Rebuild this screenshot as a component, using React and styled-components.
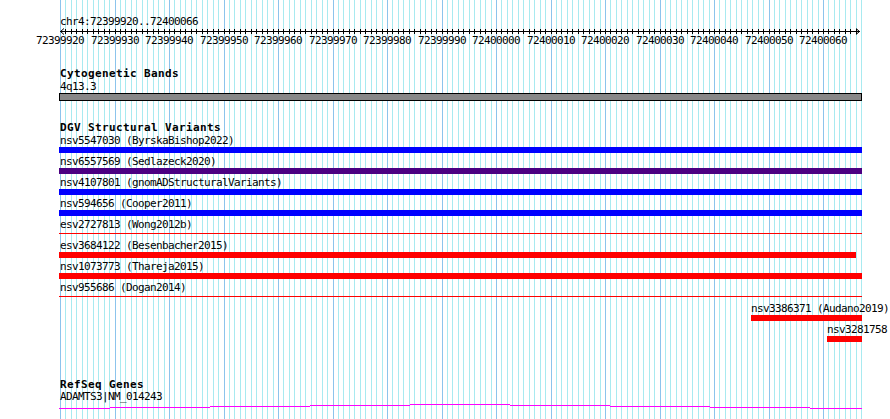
import React from 'react';
import styled, { createGlobalStyle } from 'styled-components';

const X0 = 60;
const SCALE = 5.45;
const NBASE = 147;
const START = 72399920;
const PANEL_L = 59;
const PANEL_R = 862;
const xAt = (i) => Math.round(X0 + i * SCALE);

const GlobalStyle = createGlobalStyle`
  html, body { margin: 0; padding: 0; background: #ffffff; }
  body { overflow: hidden; }
`;

const Page = styled.div`
  position: relative;
  width: 890px;
  height: 419px;
  overflow: hidden;
  background: #ffffff;
  color: #000000;
`;

const GridLayer = styled.svg`
  position: absolute;
  left: 0;
  top: 0;
  z-index: 0;
`;

const Content = styled.div`
  position: relative;
  z-index: 1;
  display: flex;
  flex-direction: column;
  padding-top: 15px;
`;

const monoFont = `
  font-family: "DejaVu Sans Mono", "Liberation Mono", monospace;
  font-size: 11px;
  letter-spacing: -0.62px;
`;

const RulerSection = styled.section`
  display: flex;
  flex-direction: column;
`;

const ChrLabel = styled.div`
  ${monoFont}
  line-height: 13px;
  height: 13px;
  padding-left: ${X0}px;
  white-space: nowrap;
`;

const RulerSvg = styled.svg`
  display: block;
`;

const Track = styled.section`
  display: flex;
  flex-direction: column;
  padding-left: ${PANEL_L}px;
  margin-top: ${(p) => p.$gap}px;
`;

const TrackTitle = styled.h2`
  margin: 0;
  font-family: "DejaVu Sans Mono", "Liberation Mono", monospace;
  font-size: 11px;
  font-weight: 700;
  letter-spacing: 0.38px;
  line-height: 12px;
  height: 12px;
  padding-left: 1px;
  white-space: nowrap;
`;

const Label = styled.div`
  ${monoFont}
  line-height: 13px;
  height: 13px;
  white-space: nowrap;
  padding-left: 1px;
`;

const GeneLabel = styled(Label)`
  line-height: 12px;
  height: 12px;
  padding-bottom: 1px;
`;

const Band = styled.div`
  box-sizing: border-box;
  width: ${PANEL_R - PANEL_L}px;
  height: 8px;
  border: 1px solid #000000;
  background: #888888;
`;

const Row = styled.div`
  display: flex;
  flex-direction: column;
  height: 21px;
`;

const Lane = styled.div`
  height: 8px;
  display: flex;
  flex-direction: column;
`;

const Bar = styled.div`
  height: ${(p) => (p.$thin ? 1 : 6)}px;
  margin-top: ${(p) => (p.$thin ? 2 : 0)}px;
  background: ${(p) => p.$color};
`;

const GeneSvg = styled.svg`
  display: block;
  margin-left: -${PANEL_L}px;
`;

const BLUE = '#0000ff';
const PURPLE = '#4b0082';
const RED = '#ff0000';

const variants = [
  { label: 'nsv5547030 (ByrskaBishop2022)', color: BLUE },
  { label: 'nsv6557569 (Sedlazeck2020)', color: PURPLE },
  { label: 'nsv4107801 (gnomADStructuralVariants)', color: BLUE },
  { label: 'nsv594656 (Cooper2011)', color: BLUE },
  { label: 'esv2727813 (Wong2012b)', color: RED, thin: true },
  { label: 'esv3684122 (Besenbacher2015)', color: RED, end: 856 },
  { label: 'nsv1073773 (Thareja2015)', color: RED },
  { label: 'nsv955686 (Dogan2014)', color: RED, thin: true },
  { label: 'nsv3386371 (Audano2019)', color: RED, start: 751 },
  { label: 'nsv3281758', color: RED, start: 827 },
];

const geneSteps = [
  [59, 110, 4],
  [110, 210, 3],
  [210, 310, 2],
  [310, 410, 1],
  [410, 510, 0],
  [510, 610, 1],
  [610, 710, 2],
  [710, 810, 3],
  [810, 862, 4],
];

function Grid() {
  const lines = [];
  for (let i = 0; i <= NBASE; i++) {
    const x = xAt(i) + 0.5;
    lines.push(
      <line
        key={i}
        x1={x}
        x2={x}
        y1={0}
        y2={419}
        stroke={i % 10 === 0 ? '#8cc4ec' : '#a8eaf0'}
        strokeWidth={1}
      />
    );
  }
  return (
    <GridLayer width="890" height="419" shapeRendering="crispEdges">
      {lines}
    </GridLayer>
  );
}

function Ruler() {
  const ticks = [];
  for (let i = 1; i < NBASE; i++) {
    const x = xAt(i) + 0.5;
    ticks.push(<line key={i} x1={x} x2={x} y1={1} y2={6} stroke="#000" />);
  }
  const labels = [];
  for (let i = 0; i <= 140; i += 10) {
    labels.push(
      <text
        key={i}
        x={xAt(i)}
        y={16}
        textAnchor="middle"
        fontFamily='"DejaVu Sans Mono", "Liberation Mono", monospace'
        fontSize="11"
        letterSpacing="-0.62"
        fill="#000"
      >
        {START + i}
      </text>
    );
  }
  return (
    <RulerSvg width="890" height="18">
      <g shapeRendering="crispEdges">
        <line x1={60} x2={860} y1={3.5} y2={3.5} stroke="#000" />
        {ticks}
      </g>
      <polyline points="64,0.5 60.5,3.5 64,6.5" fill="none" stroke="#000" />
      <polyline points="856,0.5 859.5,3.5 856,6.5" fill="none" stroke="#000" />
      {labels}
    </RulerSvg>
  );
}

function VariantRow({ v }) {
  const start = v.start ?? PANEL_L;
  const end = v.end ?? PANEL_R;
  const labelX = Math.max(start, X0) - PANEL_L - 1;
  return (
    <Row>
      <Label style={{ marginLeft: labelX }}>{v.label}</Label>
      <Lane>
        <Bar
          $color={v.color}
          $thin={v.thin}
          style={{ marginLeft: start - PANEL_L, width: end - start }}
        />
      </Lane>
    </Row>
  );
}

export default function App() {
  return (
    <Page>
      <GlobalStyle />
      <Grid />
      <Content>
        <RulerSection>
          <ChrLabel>chr4:72399920..72400066</ChrLabel>
          <Ruler />
        </RulerSection>

        <Track $gap={22}>
          <TrackTitle>Cytogenetic Bands</TrackTitle>
          <Label>4q13.3</Label>
          <Band />
        </Track>

        <Track $gap={21}>
          <TrackTitle>DGV Structural Variants</TrackTitle>
          {variants.map((v) => (
            <VariantRow key={v.label} v={v} />
          ))}
        </Track>

        <Track $gap={35}>
          <TrackTitle>RefSeq Genes</TrackTitle>
          <GeneLabel>ADAMTS3|NM_014243</GeneLabel>
          <GeneSvg width="890" height="6" shapeRendering="crispEdges">
            {geneSteps.map(([a, b, y]) => (
              <rect key={a} x={a} y={y} width={b - a} height={1} fill="#ff00ff" />
            ))}
          </GeneSvg>
        </Track>
      </Content>
    </Page>
  );
}
